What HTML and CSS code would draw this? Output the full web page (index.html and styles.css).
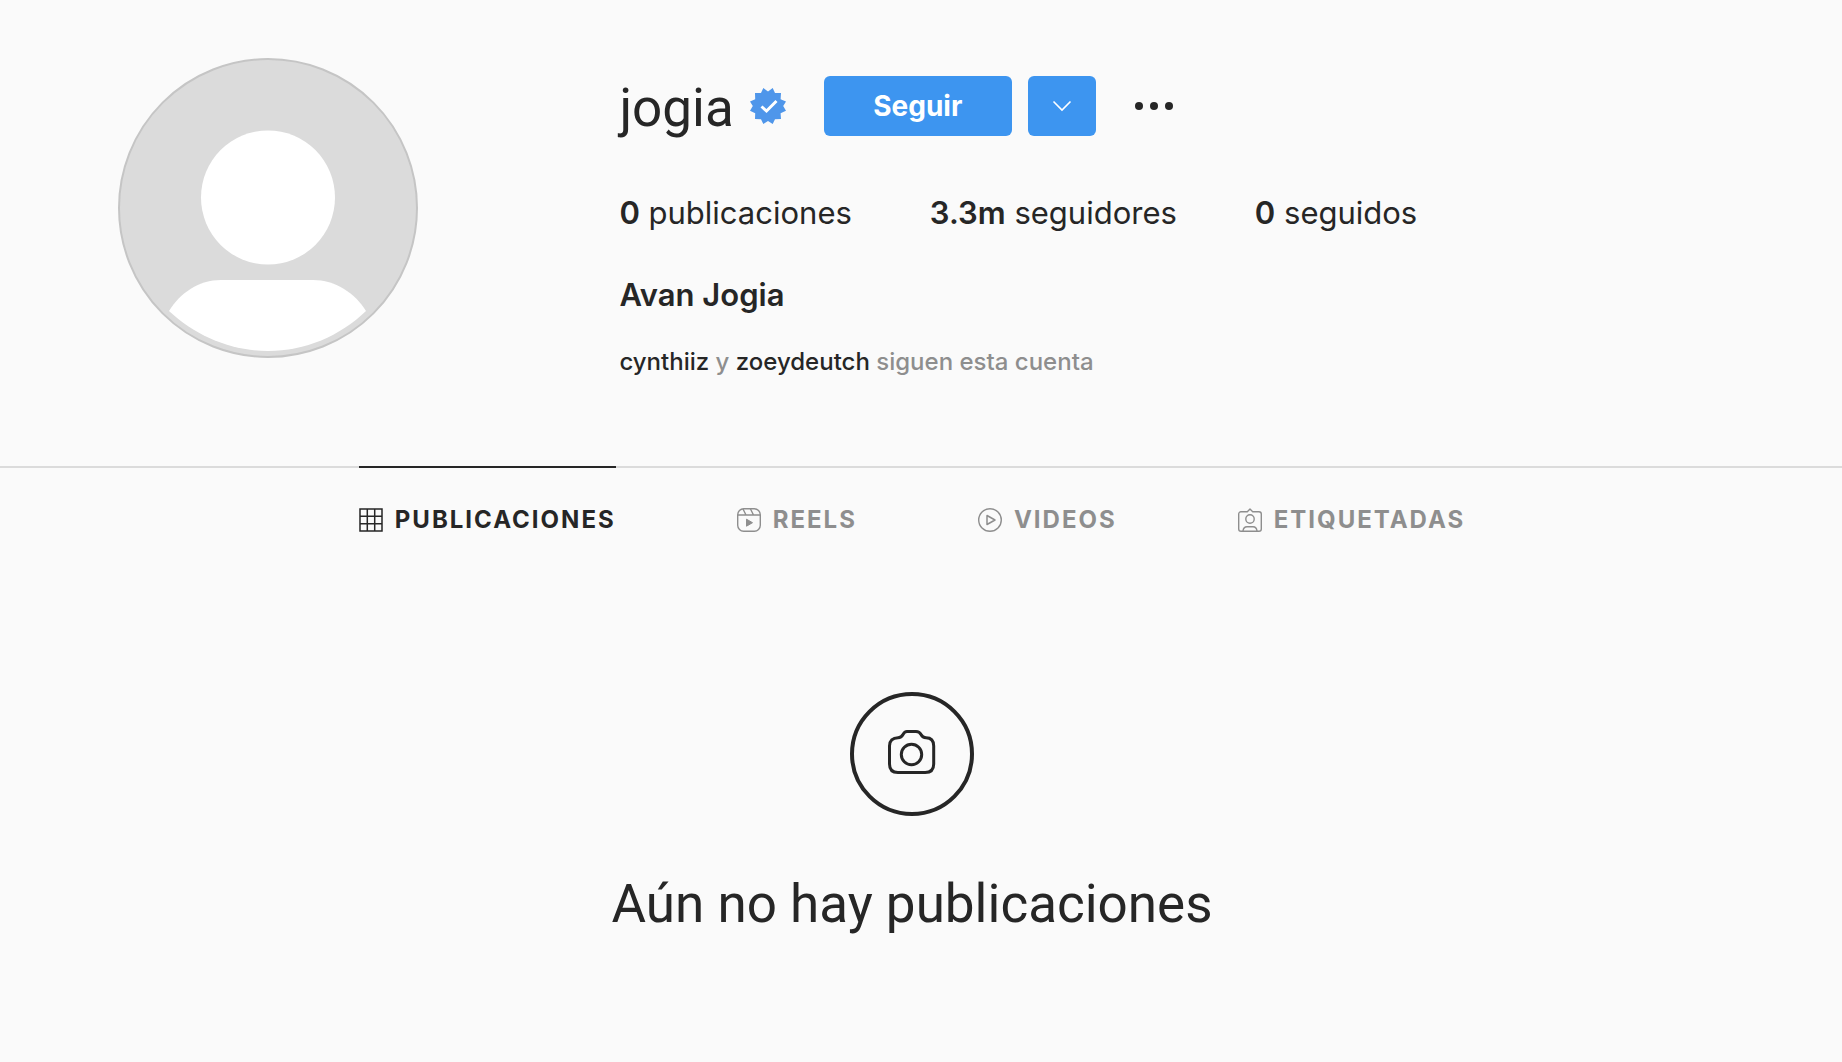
FILE: index.html
```html
<!DOCTYPE html>
<html lang="es">
<head>
<meta charset="utf-8">
<meta name="viewport" content="width=device-width, initial-scale=1">
<title>Avan Jogia (@jogia)</title>
<link rel="stylesheet" href="styles.css">
</head>
<body>
<main>
  <header class="profile">
    <div class="avatar">
      <svg viewBox="0 0 300 300" role="img" aria-label="Foto de perfil de jogia">
        <circle cx="150" cy="150" r="149" fill="#dbdbdb" stroke="#c5c5c5" stroke-width="2"/>
        <circle cx="150" cy="139.500" r="67" fill="#fff"/>
        <path d="M51 253C62 235 81 222 103 222h92c22 0 42 13 53 31-26 25-61 40-98 40s-72-15-99-40z" fill="#fff"/>
      </svg>
    </div>
    <div class="info">
      <div class="title-row">
        <h1 class="username">jogia</h1>
        <svg class="verified" viewBox="0 0 36 36" role="img" aria-label="Verificado">
          <path fill="#4f96ea" d="M18 3.400 22.700 0l2.300 5h6l-.4 6.200L36 13.500 33.200 18l2.800 4.700-5.400 2.600.4 5.700-6 .2L22.700 36 18 33.100 13.300 36 11 31.200l-6-.2.200-5.700L0 22.700 2.800 18 0 13.500l5.200-2.300L5 5h6l2.300-5z"/>
          <path fill="none" stroke="#fff" stroke-width="3" d="M11.500 18.500 16.500 23 26.500 13"/>
        </svg>
        <div class="actions">
          <button class="btn btn-follow" type="button">Seguir</button>
          <button class="btn btn-more" type="button" aria-label="Cuentas similares">
            <svg viewBox="0 0 20 12" width="20" height="12"><path d="M1.500 1.500 10 10l8.500-8.500" fill="none" stroke="#fff" stroke-width="1.600"/></svg>
          </button>
        </div>
        <button class="options" type="button" aria-label="Opciones">
          <svg viewBox="0 0 38 8" width="38" height="8" fill="#262626"><circle cx="4" cy="4" r="4"/><circle cx="19" cy="4" r="4"/><circle cx="34" cy="4" r="4"/></svg>
        </button>
      </div>
      <ul class="stats">
        <li><b>0</b> publicaciones</li>
        <li><b>3.3m</b> seguidores</li>
        <li><b>0</b> seguidos</li>
      </ul>
      <h2 class="fullname">Avan Jogia</h2>
      <p class="mutuals"><a href="#cynthiiz">cynthiiz</a> y <a href="#zoeydeutch">zoeydeutch</a> siguen esta cuenta</p>
    </div>
  </header>

  <nav class="tabs">
    <a class="tab active" href="#publicaciones">
      <svg viewBox="0 0 24 24" fill="none" stroke="currentColor"><path stroke-width="1.500" d="M1 1h22v22H1zM8.300 1v22M15.700 1v22M1 8.300h22M1 15.700h22"/></svg>
      PUBLICACIONES
    </a>
    <a class="tab" href="#reels">
      <svg viewBox="0 0 24 24" fill="none" stroke="currentColor"><rect x=".7" y=".7" width="22.600" height="22.600" rx="6" stroke-width="1.400"/><path stroke-width="1.400" d="M1 7h22M6 1l3 6M13.500 1l3 6"/><path d="M9.500 11.200v7l6-3.500z" fill="currentColor"/></svg>
      REELS
    </a>
    <a class="tab" href="#videos">
      <svg viewBox="0 0 24 24" fill="none" stroke="currentColor"><circle cx="12" cy="12" r="11.300" stroke-width="1.400"/><path stroke-width="1.500" stroke-linejoin="round" d="M9 7.500v9l8-4.500z"/></svg>
      VIDEOS
    </a>
    <a class="tab" href="#etiquetadas">
      <svg viewBox="0 0 24 24" fill="none" stroke="currentColor" stroke-width="1.400" stroke-linejoin="round"><path d="M3 3.700h6.300L12 1l2.700 2.700H21a2.300 2.300 0 0 1 2.300 2.300v15a2.300 2.300 0 0 1-2.300 2.300H3A2.300 2.300 0 0 1 .7 21V6A2.300 2.300 0 0 1 3 3.700z"/><circle cx="12" cy="11" r="4.200"/><path d="M5 23c.3-3 2-4.300 4-4.300h6c2 0 3.700 1.300 4 4.300"/></svg>
      ETIQUETADAS
    </a>
  </nav>

  <section class="empty">
    <svg class="camera" viewBox="0 0 124 124" fill="none" stroke="#262626" aria-hidden="true">
      <circle cx="62" cy="62" r="60" stroke-width="4"/>
      <path stroke-width="3" stroke-linejoin="round" d="M57 39.500h9c3 0 4 1 5 3 1.200 2.300 2.300 3.200 5 3.200 5.500 0 7.700 3 7.700 8.300v18c0 5.500-3 8.500-8.500 8.500H47.900c-5.500 0-8.400-3-8.400-8.500V54c0-5.300 3.200-8.300 8.500-8.300 2.700 0 3.800-.9 5-3.200 1-2 2-3 4-3z"/>
      <circle cx="61.500" cy="62.500" r="10.200" stroke-width="3"/>
    </svg>
    <h2 class="empty-title">Aún no hay publicaciones</h2>
  </section>
</main>
</body>
</html>
```
FILE: styles.css
```css
* { box-sizing: border-box; }

body {
  margin: 0;
  background: #fafafa;
  color: #262626;
  font-family: Inter, "Liberation Sans", sans-serif;
  font-size: 31px;
  line-height: 40px;
}

h1, h2, p, ul { margin: 0; padding: 0; }
a { color: inherit; text-decoration: none; }
button { border: 0; padding: 0; font: inherit; cursor: pointer; }
svg { display: block; flex: none; }

.profile {
  display: grid;
  grid-template-columns: 4fr 9fr;
  column-gap: 84px;
  padding: 58px 18px 90px 0;
}

.avatar { display: flex; justify-content: center; align-items: flex-start; }
.avatar svg { width: 300px; height: 300px; }

.info { padding-top: 18px; }

.title-row { display: flex; align-items: center; }
.username, .empty-title {
  font-family: Roboto, Inter, sans-serif;
  font-size: 53px;
  line-height: 60px;
  font-weight: 400;
}
.username { padding-top: 4px; line-height: 56px; }
.verified { width: 36px; height: 36px; margin-left: 16px; }
.actions { display: flex; gap: 16px; margin-left: 38px; }

.btn {
  display: flex;
  align-items: center;
  justify-content: center;
  height: 60px;
  border-radius: 6px;
  background: #3d95f0;
  color: #fff;
}
.btn-follow { width: 188px; font-size: 28px; font-weight: 700; }
.btn-more { width: 68px; }
.options { margin-left: 39px; background: none; }

.stats { display: flex; gap: 78px; margin-top: 57px; list-style: none; }
b, .fullname { font-weight: 600; }
.fullname { margin-top: 42px; font-size: 31px; line-height: 40px; }

.mutuals {
  margin-top: 33px;
  font-size: 24px;
  line-height: 28px;
  font-weight: 500;
  color: #8e8e8e;
}
.mutuals a { color: #262626; }

.tabs {
  display: flex;
  justify-content: center;
  gap: 121px;
  padding-right: 18px;
  border-top: 2px solid #dbdbdb;
}
.tab {
  display: flex;
  align-items: center;
  gap: 12px;
  height: 106px;
  margin-top: -2px;
  border-top: 2px solid transparent;
  font-size: 24px;
  font-weight: 650;
  letter-spacing: 2px;
  color: #8e8e8e;
}
.tab svg { width: 24px; height: 24px; }
.tab.active { border-color: #262626; color: #262626; }

.empty {
  display: flex;
  flex-direction: column;
  align-items: center;
  gap: 58px;
  padding: 120px 18px 96px 0;
}
.camera { width: 124px; height: 124px; }
.empty-title { text-align: center; }
```
